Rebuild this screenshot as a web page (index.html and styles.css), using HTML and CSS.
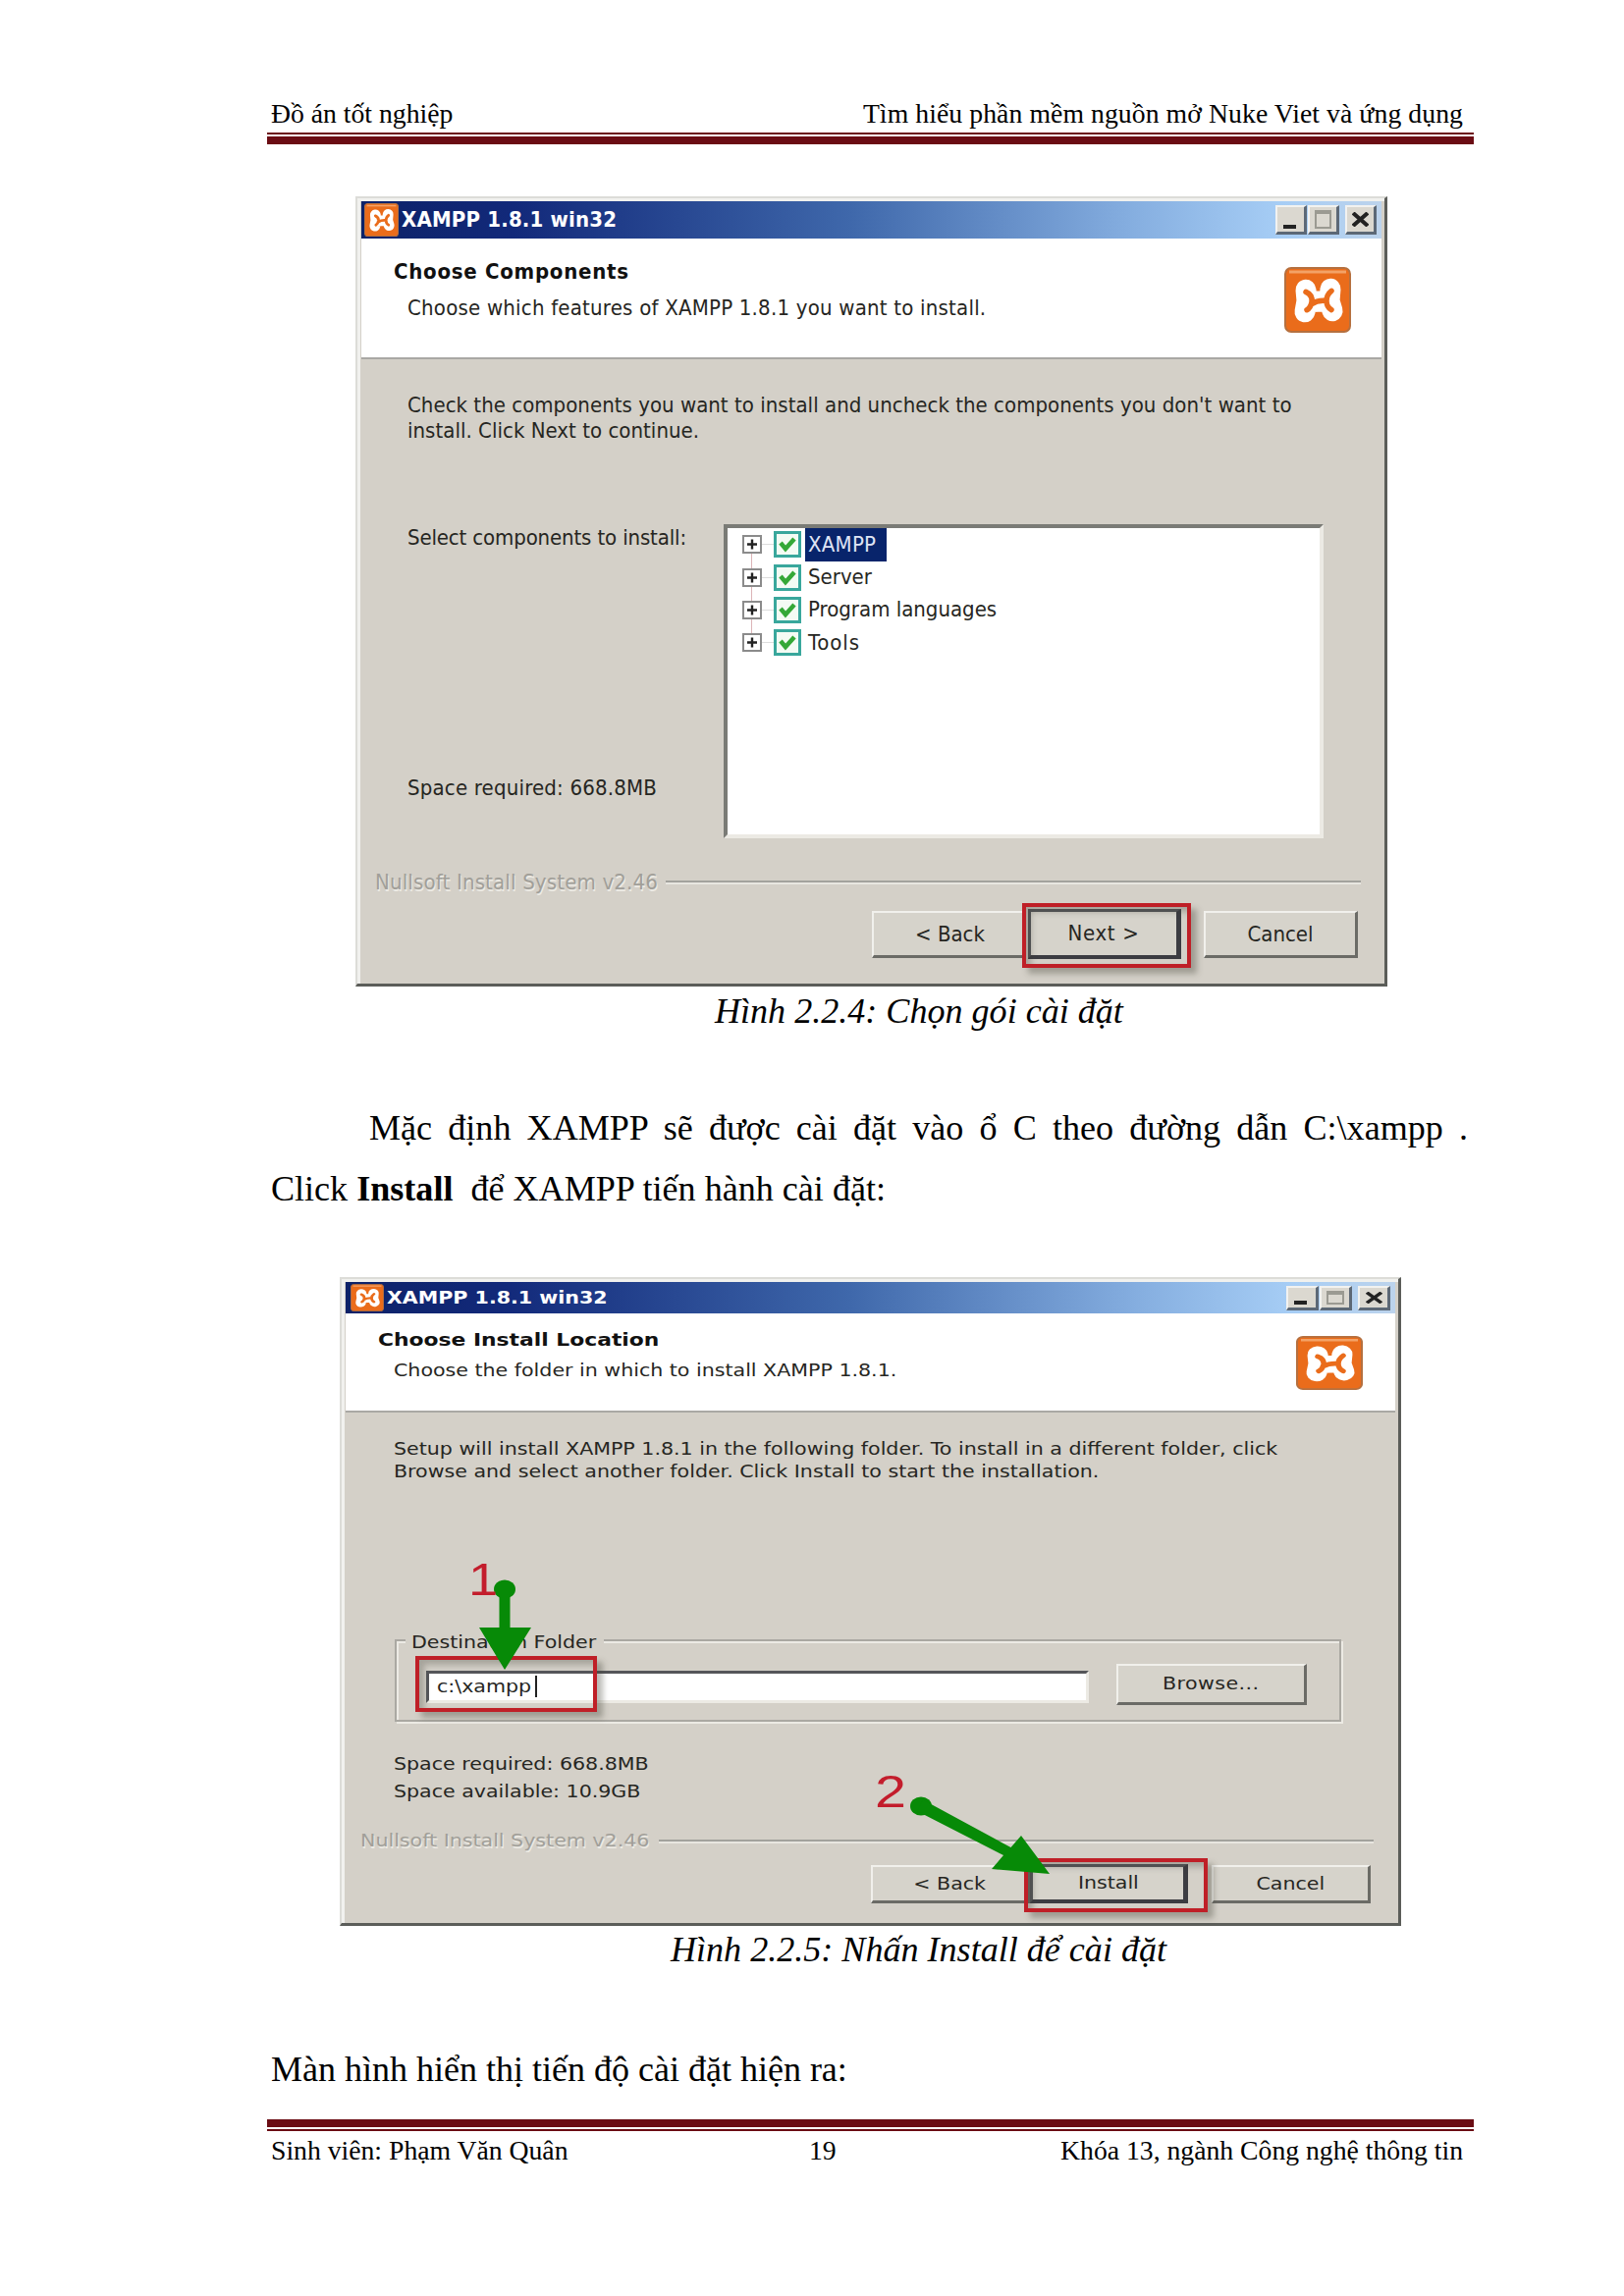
FILE: index.html
```html
<!DOCTYPE html>
<html lang="vi">
<head>
<meta charset="utf-8">
<title>Đồ án tốt nghiệp</title>
<link rel="stylesheet" href="styles.css">
</head>
<body>
<svg class="defs" width="0" height="0">
  <symbol id="xampp" viewBox="0 0 68 66" preserveAspectRatio="none">
    <rect x="1" y="1" width="66" height="64" rx="6" fill="#ea6c1b" stroke="#b5703f" stroke-width="2"/>
    <path d="M5 5H63" stroke="#f3a267" stroke-width="3"/>
    <path d="M22 23L23 34L21 45M47 22L46 34L49 44M23 35L46 34" fill="none" stroke="#fff" stroke-width="21" stroke-linecap="round" stroke-linejoin="round"/>
    <path d="M22 25Q29 28 28 35Q27 41 23 43M48 24Q43 28 43 34Q43 40 48 43M28 37Q34 33 43 34" fill="none" stroke="#ea6c1b" stroke-width="5.500" stroke-linecap="round"/>
  </symbol>
  <symbol id="check" viewBox="0 0 28 27" preserveAspectRatio="none">
    <rect x="1.5" y="1.5" width="25" height="24" fill="#f4fbf4" stroke="#39a79c" stroke-width="3"/>
    <path d="M7 12L12 18L21 8" fill="none" stroke="#35a837" stroke-width="4.5"/>
  </symbol>
  <symbol id="plus" viewBox="0 0 20 19">
    <rect x="1" y="1" width="18" height="17" fill="#fff" stroke="#8b8b8b" stroke-width="2"/>
    <path d="M5 9.5H15M10 4.5V14.5" stroke="#222" stroke-width="2.4"/>
  </symbol>
  <symbol id="close" viewBox="0 0 16 16" preserveAspectRatio="none">
    <path d="M1 1L15 15M15 1L1 15" stroke="#222" stroke-width="4"/>
  </symbol>
</svg>
<main class="page">
  <header class="running head"><span>Đồ án tốt nghiệp</span><span class="topic">Tìm hiểu phần mềm nguồn mở Nuke Viet và ứng dụng</span></header>
  <div class="rule rule-top"></div>

  <section class="win win1">
    <div class="titlebar"><svg class="ico"><use href="#xampp"/></svg><b>XAMPP 1.8.1 win32</b>
      <div class="ctl"><i class="min"></i><i class="max"></i><i class="cls"><svg><use href="#close"/></svg></i></div></div>
    <div class="banner"><div><h2>Choose Components</h2><p>Choose which features of XAMPP 1.8.1 you want to install.</p></div><svg class="logo"><use href="#xampp"/></svg></div>
    <p class="intro">Check the components you want to install and uncheck the components you don't want to<br>install. Click Next to continue.</p>
    <div class="choose">
      <div class="labels"><span class="select">Select components to install:</span><span class="req">Space required: 668.8MB</span></div>
      <ul class="tree">
        <li><svg class="pl"><use href="#plus"/></svg><svg class="ck"><use href="#check"/></svg><span class="sel">XAMPP</span></li>
        <li><svg class="pl"><use href="#plus"/></svg><svg class="ck"><use href="#check"/></svg><span class="nm">Server</span></li>
        <li><svg class="pl"><use href="#plus"/></svg><svg class="ck"><use href="#check"/></svg><span class="nm">Program languages</span></li>
        <li><svg class="pl"><use href="#plus"/></svg><svg class="ck"><use href="#check"/></svg><span class="nm tools">Tools</span></li>
      </ul>
    </div>
    <div class="brand"><span>Nullsoft Install System v2.46</span><hr></div>
    <div class="buttons"><div class="btn back"><span>&lt; Back</span></div><div class="btn main"><span>Next &gt;</span><div class="mark"></div></div><div class="btn last"><span>Cancel</span></div></div>
  </section>
  <p class="caption cap1">Hình 2.2.4: Chọn gói cài đặt</p>

  <div class="para"><p class="first">Mặc định XAMPP sẽ được cài đặt vào ổ C theo đường dẫn C:\xampp .</p><p>Click <b>Install</b>&nbsp; để XAMPP tiến hành cài đặt:</p></div>

  <section class="win win2">
    <div class="titlebar"><svg class="ico"><use href="#xampp"/></svg><b class="wide">XAMPP 1.8.1 win32</b>
      <div class="ctl"><i class="min"></i><i class="max"></i><i class="cls"><svg><use href="#close"/></svg></i></div></div>
    <div class="banner"><div><h2 class="wide">Choose Install Location</h2><p><span class="wide">Choose the folder in which to install XAMPP 1.8.1.</span></p></div><svg class="logo"><use href="#xampp"/></svg></div>
    <p class="intro"><span class="wide">Setup will install XAMPP 1.8.1 in the following folder. To install in a different folder, click<br>Browse and select another folder. Click Install to start the installation.</span></p>
    <div class="group">
      <div class="legend"><span class="wide">Destination Folder</span></div>
      <div class="pick"><div class="field"><span class="wide path">c:\xampp</span><i class="caret"></i><div class="mark"></div></div><div class="btn browse"><span class="wide">Browse...</span></div></div>
    </div>
    <p class="space"><span class="wide">Space required: 668.8MB<br>Space available: 10.9GB</span></p>
    <div class="brand"><span class="wide">Nullsoft Install System v2.46</span><hr></div>
    <div class="buttons"><div class="btn back"><span class="wide">&lt; Back</span></div><div class="btn main"><span class="wide">Install</span><div class="mark"></div></div><div class="btn last"><span class="wide">Cancel</span></div></div>
    <svg class="notes" viewBox="346 1301 1081 661">
      <g fill="#078a07"><ellipse cx="514" cy="1619" rx="11" ry="9.5"/><path d="M508.500 1619H519.500V1658H541L514 1701L488 1658H508.500Z"/>
      <ellipse cx="938" cy="1840" rx="11" ry="9.500"/><path d="M940 1833.500L1029.500 1882L1040 1870L1069 1909L1010 1904L1022 1890L934 1845Z"/></g>
      <g class="num"><text transform="translate(477 1625) scale(1.180 1)">1</text><text transform="translate(891 1841) scale(1.250 1)">2</text></g>
    </svg>
  </section>
  <p class="caption cap2">Hình 2.2.5: Nhấn Install để cài đặt</p>
  <p class="closing">Màn hình hiển thị tiến độ cài đặt hiện ra:</p>
  <div class="rule rule-bottom"></div>
  <footer class="running foot"><span>Sinh viên: Phạm Văn Quân</span><span>19</span><span>Khóa 13, ngành Công nghệ thông tin</span></footer>
</main>
</body>
</html>
```
FILE: styles.css
```css
* { box-sizing: border-box; margin: 0; padding: 0; }
body { background: #fff; color: #000; font-family: "Liberation Serif", serif; width: 1654px; height: 2339px; overflow: hidden; }
.defs { position: absolute; }
.page { display: flex; flex-direction: column; width: 1229px; margin-left: 272px; padding-top: 100px; }
.page span, .page b, .page h2, .page p { white-space: nowrap; }

.running { display: flex; justify-content: space-between; font-size: 27.7px; line-height: 32px; padding: 0 11px 0 4px; }
.head { height: 35px; }
.topic { letter-spacing: .08px; }
.rule { height: 12px; flex: none; }
.rule-top { border-top: 2px solid #6b0c14; border-bottom: 8px solid #6b0c14; }
.rule-bottom { border-top: 8px solid #6b0c14; border-bottom: 2px solid #6b0c14; margin-top: 20px; }
.foot { display: grid; grid-template-columns: 548px 1fr auto; padding-top: 4px; }

.win {
  position: relative; flex: none; background: #d4d0c8; color: #262622;
  border: 2px solid #dcdcd8; border-right: 3px solid #5b5d59; border-bottom: 3px solid #5b5d59;
  box-shadow: inset 3px 3px 0 #f1f1ee; padding: 3px 3px 0 4px;
}
.titlebar { display: flex; align-items: center; background: linear-gradient(90deg, #0d2268 0%, #12297a 15%, #3f68ab 48%, #84addf 75%, #a6cdf5 90%, #bcd3ec 100%); color: #fff; }
.ctl { display: flex; margin-left: auto; }
.ctl i { background: #dbd8d0; border: 2px solid #f2f2f0; border-right: 3px solid #5c6876; border-bottom: 3px solid #5c6876; display: flex; }
.ctl .max { margin-left: 1px; }
.ctl .cls { margin-left: 6px; align-items: center; justify-content: center; }
.min::after { content: ""; align-self: flex-end; background: #222; width: 13px; height: 4px; margin: 0 0 3px 6px; }
.max::after { content: ""; flex: 1; margin: 3px 5px; border: 2px solid #9b9a92; border-top-width: 4px; }
.cls svg { width: 17px; height: 15px; }
.banner { background: #fff; display: flex; justify-content: space-between; border-bottom: 2px solid #a9a8a4; }
.banner h2 { color: #111; }
.btn { position: relative; background: #d6d3cb; border: 2px solid #f1f0ec; border-right: 3px solid #6b6b66; border-bottom: 3px solid #6b6b66; display: flex; align-items: center; justify-content: center; flex: none; }
.main { border: 3px solid #55565a; border-right: 5px solid #3c3c42; border-bottom: 4px solid #3c3c42; z-index: 1; }
.mark { position: absolute; border: 4px solid #bf1f27; box-shadow: 6px 6px 6px rgba(60,60,50,.35), inset 5px 5px 6px rgba(60,60,50,.3); }
.buttons, .brand { display: flex; }
.brand { align-items: center; color: #a19f99; text-shadow: 1px 2px 0 #eceae4; }
.brand hr { flex: 1; border: 0; height: 4px; background: #a3a29d; border-bottom: 2px solid #e8e6e0; margin-left: 8px; }

.win1 { width: 1051px; height: 805px; margin: 53px 0 0 90px; font: 22px/26px "DejaVu Sans Condensed", "DejaVu Sans", sans-serif; }
.win1 .titlebar { height: 38px; padding: 0 5px 0 3px; letter-spacing: .18px; }
.win1 .ico { width: 35px; height: 34px; margin-right: 3px; }
.win1 .ctl i { width: 32px; height: 30px; }
.win1 .banner { height: 123px; padding: 21px 31px 0 33px; }
.win1 h2 { font-size: 22px; line-height: 26px; letter-spacing: .73px; }
.win1 .banner p { margin: 11px 0 0 14px; letter-spacing: .22px; }
.win1 .logo { width: 68px; height: 67px; margin-top: 8px; }
.win1 .intro { margin: 34px 0 0 47px; letter-spacing: .03px; }
.choose { display: grid; grid-template-columns: 322px 611px; height: 320px; margin: 82px 0 0 47px; }
.labels { display: flex; flex-direction: column; align-items: flex-start; justify-content: space-between; padding: 1px 0 38px; }
.select { letter-spacing: -.14px; }
.req { letter-spacing: .19px; }
.tree { list-style: none; background: #fff; border: 4px solid #7a7b76; border-right: 4px solid #eceae4; border-bottom: 4px solid #eceae4; }
.tree li { display: flex; align-items: center; height: 33.4px; padding-left: 15px; background: linear-gradient(#dcb4b8, #dcb4b8) 24px 0 / 1px 100% no-repeat, linear-gradient(#ddd, #ddd) 35px 50% / 12px 1px no-repeat; }
.tree li:first-child { background-position: 24px 100%, 35px 50%; }
.tree li:first-child, .tree li:last-child { background-size: 1px 50%, 12px 1px; }
.pl { width: 20px; height: 19px; }
.ck { width: 28px; height: 27px; margin-left: 12px; }
.sel { background: #08246b; color: #dfe4f5; height: 34px; width: 83px; padding: 4px 3px; margin-left: 4px; letter-spacing: .24px; }
.nm { margin-left: 7px; }
.tools { letter-spacing: .9px; }
.win1 .brand { margin: 32px 21px 0 14px; letter-spacing: .17px; }
.win1 .buttons { margin: 16px 0 0 520px; }
.win1 .btn { width: 157px; height: 48px; }
.win1 .back { padding-left: 3px; }
.win1 .main { width: 156px; height: 51px; margin: -2px 0 0 2px; letter-spacing: .7px; }
.win1 .last { margin-left: 23px; }
.win1 .main .mark { inset: -9px -15px -13px -9px; }

.caption { font-style: italic; font-size: 36.1px; line-height: 40px; }
.cap1 { margin: 5px 0 0 456px; }
.para { font-size: 36.1px; line-height: 62px; margin: 68px 6px 0 4px; }
.first { text-indent: 100px; text-align-last: justify; }
.page .first { white-space: normal; }

.win2 { width: 1081px; height: 661px; margin: 59px 0 0 74px; font: 18.5px/23px "DejaVu Sans", sans-serif; }
.wide { display: inline-block; transform: translateY(-1.5px) scaleX(1.112); transform-origin: 0 50%; }
.btn .wide { transform-origin: 50% 50%; }
.win2 .titlebar { height: 32px; padding: 0 5px; }
.win2 .ico { width: 34px; height: 28px; margin-right: 3px; }
.win2 .ctl i { width: 33px; height: 25px; }
.win2 .cls svg { height: 12px; }
.win2 .banner { height: 101px; padding: 16px 33px 0 33px; }
.win2 h2 { font-size: 18.5px; line-height: 23px; transform: translateY(-1.5px) scaleX(1.18); }
.win2 .banner p { margin: 8px 0 0 16px; }
.win2 .logo { width: 68px; height: 55px; margin-top: 7px; }
.win2 .intro { margin: 26px 0 0 49px; }
.group { width: 964px; height: 84px; margin: 159px 0 0 50px; border: 2px solid #aaa8a2; box-shadow: 2px 2px 0 #eceae4, inset 2px 2px 0 #eceae4; }
.legend { width: 202px; height: 23px; margin: -10px 0 0 9px; padding-left: 6px; background: #d4d0c8; }
.pick { display: flex; align-items: flex-start; margin: 10px 0 0 30px; }
.field { position: relative; width: 675px; height: 33px; margin-top: 7px; background: #fff; border: 3px solid #55565a; border-right: 3px solid #eceae4; border-bottom: 3px solid #eceae4; padding: 2px 8px; display: flex; }
.field .mark { left: -14px; top: -18px; width: 185px; height: 57px; }
.path { width: 97px; }
.caret { width: 2px; height: 22px; background: #222; margin-left: 3px; }
.browse { width: 194px; height: 42px; margin-left: 28px; letter-spacing: .4px; }
.space { margin: 30px 0 0 49px; line-height: 27.5px; }
.win2 .brand { margin: 25px 22px 0 15px; }
.win2 .brand span { width: 296px; }
.win2 .buttons { margin: 13px 0 0 535px; }
.win2 .buttons .btn { width: 162px; height: 39px; }
.win2 .buttons .main { width: 161px; height: 40px; margin-top: -1px; }
.win2 .buttons .last { margin-left: 24px; }
.win2 .main .mark { inset: -9px -25px -13px -9px; }
.notes { position: absolute; left: -2px; top: -2px; width: 1081px; height: 661px; z-index: 3; }
.num { font: 46px "Liberation Sans", sans-serif; fill: #c31d2c; }
.cap2 { margin: 4px 0 0 411px; }
.closing { font-size: 36px; line-height: 62px; margin: 71px 0 0 4px; }
```
